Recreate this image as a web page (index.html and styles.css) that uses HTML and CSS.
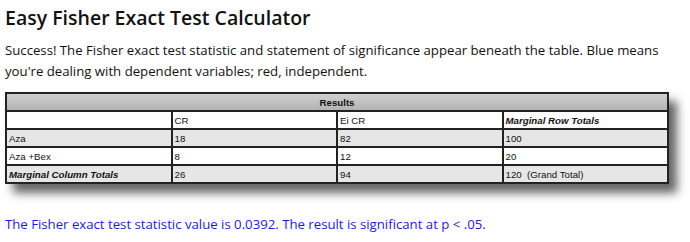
FILE: index.html
```html
<!DOCTYPE html>
<html>
<head>
<meta charset="utf-8">
<link rel="stylesheet" href="styles.css">
</head>
<body>
<h1 class="title">Easy Fisher Exact Test Calculator</h1>
<p class="intro">Success! The Fisher exact test statistic and statement of significance appear beneath the table. Blue means you're dealing with dependent variables; red, independent.</p>
<table class="results">
  <tr class="head"><th colspan="4">Results</th></tr>
  <tr><td></td><td>CR</td><td>Ei CR</td><td class="em">Marginal Row Totals</td></tr>
  <tr class="alt"><td>Aza</td><td>18</td><td>82</td><td>100</td></tr>
  <tr><td>Aza +Bex</td><td>8</td><td>12</td><td>20</td></tr>
  <tr class="alt"><td class="em">Marginal Column Totals</td><td>26</td><td>94</td><td>120&nbsp; (Grand Total)</td></tr>
</table>
<p class="result">The Fisher exact test statistic value is 0.0392. The result is significant at p &lt; .05.</p>
</body>
</html>
```
FILE: styles.css
```css
body {
  margin: 0;
  padding: 0 5px;
  font-family: "Open Sans", sans-serif;
  color: #111;
  background: #fff;
}
.title {
  font-size: 19.5px;
  font-weight: 600;
  margin: 4px 0 0;
  line-height: 27px;
}
.intro {
  font-size: 13.2px;
  line-height: 21px;
  margin: 9px 0 0;
}
.results {
  margin-top: 10px;
  width: 664px;
  border-collapse: collapse;
  table-layout: fixed;
  font-family: "Liberation Sans", Arial, sans-serif;
  font-size: 9.7px;
  border: 2px solid #222;
  box-shadow: 8px 9px 9px #666;
}
.results td, .results th {
  border: 2px solid #222;
  height: 16px;
  padding: 0 2px;
  text-align: left;
  color: #111;
}
.results .head th {
  text-align: center;
  font-weight: bold;
  background: linear-gradient(#cfcfcf, #b3b3b3);
}
.results .alt td {
  background: #e6e6e6;
}
.results .em {
  font-weight: bold;
  font-style: italic;
}
.result {
  color: #1a1aee;
  font-size: 13.2px;
  margin: 30px 0 0;
  line-height: 20px;
}
```
